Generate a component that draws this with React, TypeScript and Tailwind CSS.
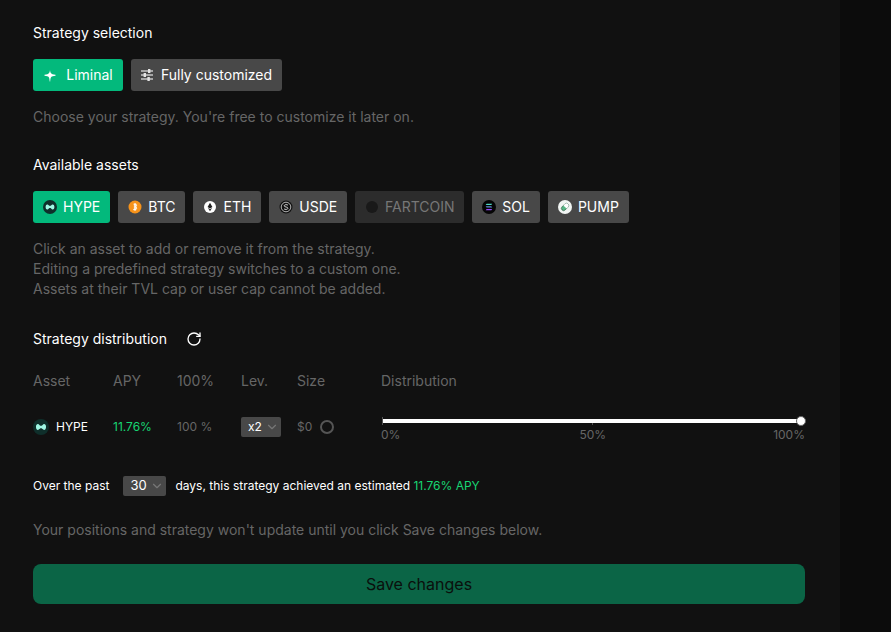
import { ChevronDown, RotateCw } from "lucide-react";

function HypeIcon({ size = 14 }: { size?: number }) {
  return (
    <svg width={size} height={size} viewBox="0 0 14 14" className="shrink-0">
      <circle cx="7" cy="7" r="7" fill="#0f2f2b" />
      <path d="M2.600 7c0-2.300 1.500-3 2.500-2.200.8.600 1.100 1.200 1.900 1.200s1.100-.6 1.900-1.200c1-.8 2.500-.1 2.500 2.200s-1.500 3-2.500 2.200C8.100 8.600 7.800 8 7 8s-1.100.6-1.900 1.200C4.100 10 2.600 9.300 2.600 7z" fill="#9ff7e4" />
    </svg>
  );
}

function BtcIcon() {
  return (
    <svg width="14" height="14" viewBox="0 0 14 14" className="shrink-0">
      <circle cx="7" cy="7" r="6.500" fill="#f7931a" />
      <path d="M5.600 4.200h2c1.300 0 1.300 2.300 0 2.500 1.500.2 1.400 2.900-.2 2.900H5.200M6.400 3.400v7.200M7.600 3.400v7.200" fill="none" stroke="#fff" strokeWidth="0.900" />
    </svg>
  );
}

function EthIcon() {
  return (
    <svg width="14" height="14" viewBox="0 0 14 14" className="shrink-0">
      <circle cx="7" cy="7" r="6" fill="#fff" />
      <path d="M7 2.800 4.600 7 7 8.400 9.400 7z M4.800 7.800 7 11.200l2.200-3.400L7 9.200z" fill="#222" />
    </svg>
  );
}

function UsdeIcon() {
  return (
    <svg width="14" height="14" viewBox="0 0 14 14" className="shrink-0">
      <circle cx="7" cy="7" r="6.500" fill="#111" />
      <circle cx="7" cy="7" r="4.800" fill="none" stroke="#ddd" strokeWidth="0.800" />
      <path d="M9 5.200C8.300 4.400 5.300 4.300 5.200 5.800c0 1.700 3.800.7 3.700 2.500C8.800 9.800 5.700 9.700 5 8.800" fill="none" stroke="#ddd" strokeWidth="0.900" />
    </svg>
  );
}

function FartIcon() {
  return (
    <svg width="14" height="14" viewBox="0 0 14 14" className="shrink-0">
      <circle cx="7" cy="7" r="6" fill="#191919" />
    </svg>
  );
}

function SolIcon() {
  return (
    <svg width="14" height="14" viewBox="0 0 14 14" className="shrink-0">
      <circle cx="7" cy="7" r="7" fill="#050505" />
      <path d="M4.600 3.700h5.600L9.300 5H3.700z" fill="#4fd8c4" />
      <path d="M3.700 6.300h5.600l.9 1.300H4.600z" fill="#5f8fd8" />
      <path d="M4.600 9h5.600l-.9 1.300H3.700z" fill="#9945ff" />
    </svg>
  );
}

function PumpIcon() {
  return (
    <svg width="14" height="14" viewBox="0 0 14 14" className="shrink-0">
      <circle cx="7" cy="7" r="7" fill="#f1f5f3" />
      <g transform="rotate(-45 7 7)">
        <rect x="2.800" y="4.800" width="8.400" height="4.400" rx="2.200" fill="#58b886" stroke="#1c3b2c" strokeWidth="0.500" />
        <path d="M7 4.800h2a2.200 2.200 0 0 1 0 4.400H7z" fill="#fff" />
      </g>
    </svg>
  );
}

function SparkIcon() {
  return (
    <svg width="14" height="14" viewBox="0 0 14 14" className="shrink-0">
      <path d="M7 1.500c.2 3.300.6 4.600 5.500 5.300v.9C8 8.100 7.500 9 7.200 13.500h-.5C6.400 9 6 8.100 1.500 7.700v-.9C6.400 6.100 6.800 4.800 7 1.500z" fill="#fff" />
    </svg>
  );
}

function TuneIcon() {
  return (
    <svg width="12" height="12" viewBox="0 0 12 12" className="shrink-0" fill="#e4e4e4">
      <rect x="0" y="1.400" width="12" height="1.200" />
      <rect x="7" y="0" width="2.400" height="4" />
      <rect x="0" y="5.400" width="12" height="1.200" />
      <rect x="2.600" y="4" width="2.400" height="4" />
      <rect x="0" y="9.400" width="12" height="1.200" />
      <rect x="6.400" y="8" width="2.400" height="4" />
    </svg>
  );
}

const assets = [
  { name: "HYPE", icon: <HypeIcon />, cls: "bg-[#03b97c] text-white px-[10px]" },
  { name: "BTC", icon: <BtcIcon />, cls: "bg-[#484848] text-white px-[10px]" },
  { name: "ETH", icon: <EthIcon />, cls: "bg-[#484848] text-white px-[10px]" },
  { name: "USDE", icon: <UsdeIcon />, cls: "bg-[#484848] text-white px-[10px]" },
  { name: "FARTCOIN", icon: <FartIcon />, cls: "bg-[#2c2c2c] text-[#777777] w-[109px] justify-center" },
  { name: "SOL", icon: <SolIcon />, cls: "bg-[#484848] text-white px-[10px]" },
  { name: "PUMP", icon: <PumpIcon />, cls: "bg-[#484848] text-white w-[81px] justify-center" },
];

export default function App() {
  return (
    <div className="flex h-[632px] w-[891px] overflow-hidden bg-[#0c0c0c] text-white font-['Inter',sans-serif]">
      <div className="h-full w-[840px] bg-[#111111] pl-[33px] pr-[35px] pt-[24px]">
        <h2 className="text-sm leading-[18px]">Strategy selection</h2>
        <div className="mt-[17px] flex gap-2">
          <button className="flex h-8 w-[90px] items-center justify-center gap-[9px] rounded-[3px] bg-[#03b97c] text-sm">
            <SparkIcon />
            Liminal
          </button>
          <button className="flex h-8 w-[151px] items-center justify-center gap-2 rounded-[3px] bg-[#484848] text-sm">
            <TuneIcon />
            Fully customized
          </button>
        </div>
        <p className="mt-4 text-sm leading-5 text-[#666666]">Choose your strategy. You're free to customize it later on.</p>

        <h2 className="mt-[29px] text-sm leading-[18px]">Available assets</h2>
        <div className="mt-[17px] flex gap-2">
          {assets.map((a) => (
            <button key={a.name} className={`flex h-8 items-center gap-[6px] rounded-[3px] text-sm ${a.cls}`}>
              {a.icon}
              {a.name}
            </button>
          ))}
        </div>
        <div className="mt-4 text-sm leading-5 text-[#666666]">
          <p>Click an asset to add or remove it from the strategy.</p>
          <p>Editing a predefined strategy switches to a custom one.</p>
          <p>Assets at their TVL cap or user cap cannot be added.</p>
        </div>

        <div className="mt-[31px] flex h-[18px] items-center gap-[19px]">
          <h2 className="text-sm leading-[18px]">Strategy distribution</h2>
          <RotateCw size={16} strokeWidth={2} />
        </div>

        <div className="mt-[23px] grid grid-cols-[80px_64px_64px_56px_84px_1fr] text-sm leading-[20px] text-[#666666]">
          <div>Asset</div>
          <div>APY</div>
          <div>100%</div>
          <div>Lev.</div>
          <div>Size</div>
          <div>Distribution</div>
        </div>

        <div className="mt-[16px] grid h-10 grid-cols-[80px_64px_64px_56px_84px_1fr] items-center text-xs">
          <div className="flex items-center gap-[7px]">
            <HypeIcon size={16} />
            <span>HYPE</span>
          </div>
          <div className="text-[#17d673]">11.76%</div>
          <div className="text-[#666666]">100 %</div>
          <div>
            <div className="flex h-5 w-10 items-center justify-between rounded-[2px] bg-[#484848] pl-[7px] pr-[2px]">
              x2
              <ChevronDown size={14} className="text-[#777777]" />
            </div>
          </div>
          <div className="flex items-center gap-2 text-[#666666]">
            $0
            <span className="h-[14px] w-[14px] rounded-full border-2 border-[#555555]" />
          </div>
          <div className="h-4 pl-[2px] pr-[4px]">
            <div className="relative h-1 bg-white">
              <span className="absolute -right-[5px] -top-[3px] h-[10px] w-[10px] rounded-full border border-[#666666] bg-white" />
              <span className="absolute left-[-1px] -top-[2px] h-2 w-px bg-[#555555]" />
              <span className="absolute left-1/2 top-[4px] h-[2px] w-px bg-[#555555]" />
            </div>
            <div className="relative mt-[4px] ml-[-2px] mr-[-4px] flex justify-between text-xs leading-4 text-[#666666]">
              <span>0%</span>
              <span className="translate-x-[6px]">50%</span>
              <span>100%</span>
            </div>
          </div>
        </div>

        <div className="mt-[29px] flex h-5 items-center text-xs">
          <span>Over the past</span>
          <div className="ml-[14px] flex h-5 w-[43px] items-center justify-between rounded-[2px] bg-[#484848] pl-[7px] pr-[2px] text-[13px]">
            30
            <ChevronDown size={14} className="text-[#777777]" />
          </div>
          <span className="ml-[9px]">days, this strategy achieved an estimated <span className="text-[#17d673]">11.76% APY</span></span>
        </div>

        <p className="mt-6 text-sm leading-5 text-[#666666]">Your positions and strategy won't update until you click Save changes below.</p>

        <button className="mt-6 flex h-10 w-full items-center justify-center rounded-lg bg-[#0b6546] text-base text-[#0a0f0c]">
          Save changes
        </button>
      </div>
    </div>
  );
}
